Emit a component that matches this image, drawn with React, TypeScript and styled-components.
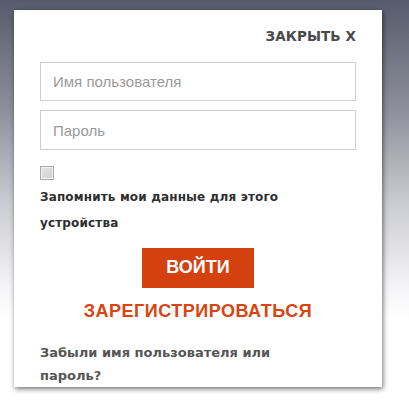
import React, { useState } from "react";
import styled, { createGlobalStyle } from "styled-components";

const GlobalStyle = createGlobalStyle`
  html, body {
    margin: 0;
    padding: 0;
  }
  body {
    width: 409px;
    height: 402px;
    overflow: hidden;
    font-family: "Liberation Sans", Arial, sans-serif;
    background: linear-gradient(to bottom, #565a6b 0px, #8d909b 110px, #c9cad0 200px, #f6f6f8 290px, #ffffff 320px);
  }
`;

const heavy = `"DejaVu Sans", "Liberation Sans", Arial, sans-serif`;

const Page = styled.div`
  padding: 10px 0 0 14px;
`;

const Card = styled.div`
  width: 368px;
  height: 377px;
  box-sizing: border-box;
  background: #fff;
  box-shadow: 1px 2px 5px rgba(0, 0, 0, 0.55);
  padding: 0 26px 0 26px;
  display: flex;
  flex-direction: column;
`;

const CloseRow = styled.div`
  display: flex;
  justify-content: flex-end;
  padding-top: 19px;
  height: 33px;
  box-sizing: border-box;
`;

const CloseLink = styled.a`
  font-family: ${heavy};
  font-size: 13.5px;
  font-weight: 700;
  color: #4a4a4a;
  letter-spacing: 0.1px;
  cursor: pointer;
  line-height: 14px;
`;

const Field = styled.input<{ $gap: number }>`
  width: 316px;
  height: 40px;
  box-sizing: border-box;
  border: 1px solid #cfcfcf;
  padding: 0 12px;
  font-family: "Liberation Sans", Arial, sans-serif;
  font-size: 15px;
  color: #333;
  outline: none;
  margin-top: ${(p) => p.$gap}px;
  &::placeholder {
    color: #9a9a9a;
  }
`;

const Check = styled.input`
  appearance: none;
  width: 14px;
  height: 14px;
  box-sizing: border-box;
  margin: 16px 0 0 0;
  border: 1px solid #a9a9a9;
  background: linear-gradient(135deg, #e6e6e6, #cfcfcf);
  box-shadow: inset 0 0 0 1px #f2f2f2;
  cursor: pointer;
  &:checked {
    background: #888;
  }
`;

const Remember = styled.label`
  display: block;
  font-family: ${heavy};
  font-size: 12px;
  font-weight: 700;
  color: #2e2e2e;
  letter-spacing: 0.15px;
  line-height: 26px;
  width: 260px;
  margin-top: 4px;
`;

const LoginButton = styled.button`
  align-self: center;
  width: 112px;
  height: 41px;
  margin-top: 12px;
  background: #d4410f;
  border: none;
  color: #fff;
  font-family: "Liberation Sans", Arial, sans-serif;
  font-size: 18px;
  font-weight: 700;
  cursor: pointer;
`;

const Register = styled.a`
  align-self: center;
  margin-top: 12px;
  font-size: 18px;
  font-weight: 700;
  letter-spacing: 0.5px;
  color: #d9440f;
  line-height: 22px;
  cursor: pointer;
`;

const Forgot = styled.a`
  display: block;
  margin-top: 19px;
  width: 280px;
  font-family: ${heavy};
  font-size: 13px;
  font-weight: 700;
  color: #555;
  line-height: 23px;
  cursor: pointer;
`;

export default function App() {
  const [remember, setRemember] = useState(false);

  return (
    <>
      <GlobalStyle />
      <Page>
        <Card>
          <CloseRow>
            <CloseLink>ЗАКРЫТЬ X</CloseLink>
          </CloseRow>
          <Field $gap={19} placeholder="Имя пользователя" />
          <Field $gap={9} type="password" placeholder="Пароль" />
          <Check
            type="checkbox"
            checked={remember}
            onChange={(e) => setRemember(e.target.checked)}
          />
          <Remember>Запомнить мои данные для этого устройства</Remember>
          <LoginButton>ВОЙТИ</LoginButton>
          <Register>ЗАРЕГИСТРИРОВАТЬСЯ</Register>
          <Forgot>Забыли имя пользователя или пароль?</Forgot>
        </Card>
      </Page>
    </>
  );
}
